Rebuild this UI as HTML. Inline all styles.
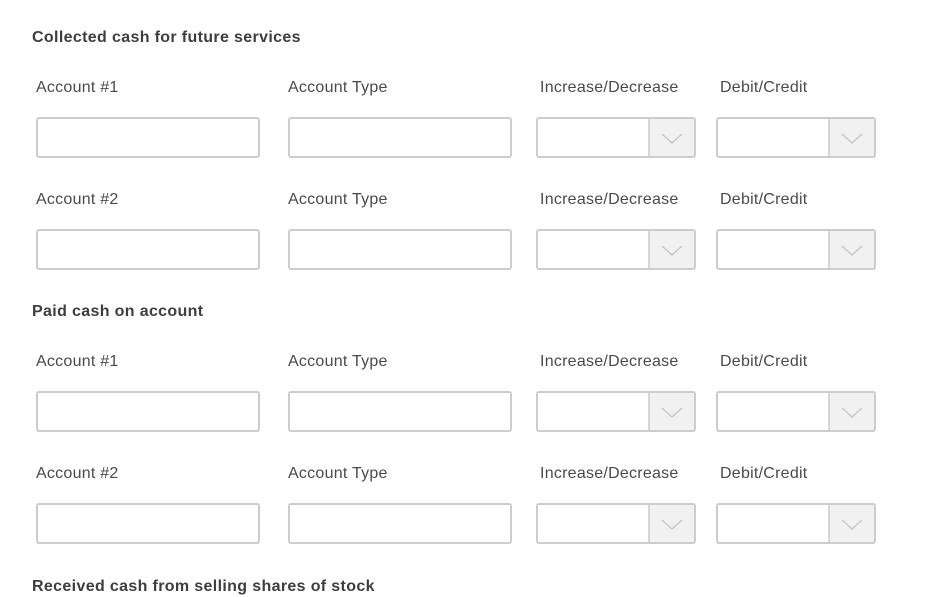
<!DOCTYPE html>
<html><head><style>
body{margin:0;width:940px;height:583px;overflow:hidden;background:#fff;font-family:"Liberation Sans",sans-serif;position:relative}
.h{position:absolute;left:32px;font-weight:bold;font-size:16px;color:#3e3e3e;line-height:20px;letter-spacing:0.35px}
.l{position:absolute;font-size:16px;color:#4a4a4a;line-height:20px;letter-spacing:0.25px}
.i{position:absolute;height:37px;border:2px solid #cdcdcd;border-radius:3px;box-sizing:content-box;background:#fff}
.s{position:absolute;width:156px;height:37px;border:2px solid #cdcdcd;border-radius:3px;background:#fff;overflow:hidden}
.s .c{position:absolute;right:0;top:0;width:44px;height:37px;background:#f1f1f1;border-left:2px solid #d6d6d6}
.s svg{position:absolute;left:11px;top:14px}
</style></head><body>
<div class="h" style="top:28px">Collected cash for future services</div>
<div class="h" style="top:302px">Paid cash on account</div>
<div class="h" style="top:577px">Received cash from selling shares of stock</div>
<script>
var rows=[[78,117,"Account #1"],[190,229,"Account #2"],[352,391,"Account #1"],[464,503,"Account #2"]];
var h="";
rows.forEach(function(r){
h+='<div class="l" style="left:36px;top:'+r[0]+'px">'+r[2]+'</div>';
h+='<div class="l" style="left:288px;top:'+r[0]+'px">Account Type</div>';
h+='<div class="l" style="left:540px;top:'+r[0]+'px">Increase/Decrease</div>';
h+='<div class="l" style="left:720px;top:'+r[0]+'px">Debit/Credit</div>';
h+='<div class="i" style="left:36px;top:'+r[1]+'px;width:220px"></div>';
h+='<div class="i" style="left:288px;top:'+r[1]+'px;width:220px"></div>';
var sv='<div class="c"><svg width="22" height="12"><path d="M1 1 L11 10 L21 1" fill="none" stroke="#c8c8c8" stroke-width="1.5"/></svg></div>';
h+='<div class="s" style="left:536px;top:'+r[1]+'px">'+sv+'</div>';
h+='<div class="s" style="left:716px;top:'+r[1]+'px">'+sv+'</div>';
});
document.write(h);
</script>
</body></html>
